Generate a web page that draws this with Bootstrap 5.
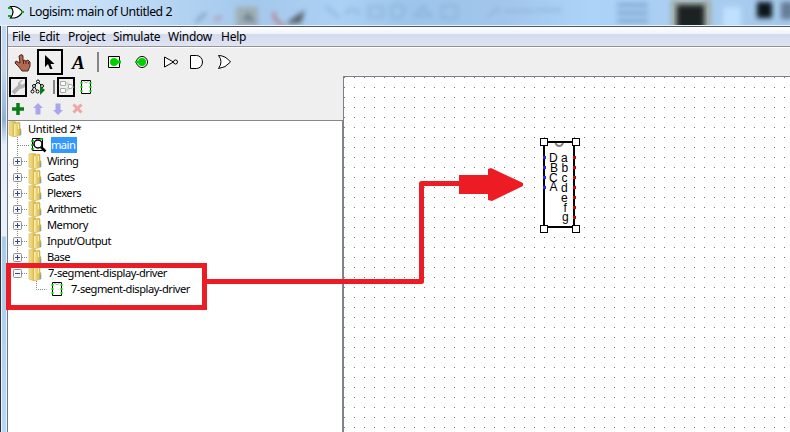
<!DOCTYPE html>
<html lang="en">
<head>
<meta charset="utf-8">
<meta name="viewport" content="width=device-width, initial-scale=1">
<title>Logisim: main of Untitled 2</title>
<link href="https://cdn.jsdelivr.net/npm/bootstrap@5.3.0/dist/css/bootstrap.min.css" rel="stylesheet">
<style>
body{width:790px;height:432px;font-family:"Noto Sans","Open Sans",sans-serif;color:#000;background:#b0d2f5}
svg{display:block;flex:none}
.app{width:790px;height:432px;padding-left:7px;background:linear-gradient(90deg,#2c2f3c 0 1px,#edf4fb 1px 2px,transparent 2px 6px,#e8f3fd 6px 7px,transparent 7px),linear-gradient(#bcd8f4 0,#c4d9ee 70px,#8fb0d4 120px,#e4eef8 145px,#e8f1fa 236px,#abcbea 237px,#b9d8f8 432px)}
.titlebar{height:26px;margin-left:-7px;padding-left:7px;background:linear-gradient(90deg,#d5e6f6 0,#c6dff8 100px,#b2d2f2 185px,#a4c8ec 250px,#acd1f5 340px,#9ec5ea 410px,#a2c6eb 500px,#add3f8 590px,#a4c8ea 790px);border-bottom:1px solid #e9f3fc}
.titlebar .glass{left:0;top:0}
.title-text{font-size:12.3px;line-height:24px;padding-left:5px;white-space:nowrap;letter-spacing:-.46px}
.frame{height:406px;border-left:1px solid #6f7480;border-top:1px solid #4a5568;background:#efefef}
.menus{height:20px;background:linear-gradient(#fff 0,#eff2f8 7px,#d4dbed 7px,#dfe4f3 19px);border-bottom:1px solid #949494}
.menus span{font-size:12px;line-height:20px;white-space:nowrap;letter-spacing:-.25px}
.tools{height:29px;border-top:1px solid #fff}
.side{width:335px}
.tree{height:312px;border:1px solid #828790;border-width:1px 1px 0 0;background:#fff;font-size:11.15px;line-height:16px;letter-spacing:-.5px}
.tree .rowline{height:16px;white-space:nowrap}
.sel{background:#3399ff;color:#fff;width:26px;height:16px;margin-left:2px;letter-spacing:-.55px}
.sheet{height:356px;border:1px solid #7c808a;border-width:1px 0 0 1px;background:#fff}
.over{left:0;top:0;pointer-events:none}
.pins{font-family:"Liberation Sans",Arial,sans-serif;font-size:12px}
.letter{font:italic bold 19px "Liberation Serif",serif}
</style>
<script src="https://cdn.jsdelivr.net/npm/bootstrap@5.3.0/dist/js/bootstrap.bundle.min.js"></script>
</head>
<body class="m-0 overflow-hidden">
<svg width="0" height="0" class="position-absolute">
 <defs>
  <linearGradient id="gold"><stop stop-color="#f3df8c"/><stop offset=".45" stop-color="#e9d06d"/><stop offset="1" stop-color="#c9a638"/></linearGradient>
  <symbol id="folder" viewBox="0 0 16 16"><path d="M1 1 4.500 0 8 1v13l-2 2-5-2Z" fill="url(#gold)" stroke="#d3b858" stroke-width=".6"/><path d="M6 2.500 11 1l1 1v5l1 1v6l-7 2Z" fill="url(#gold)" stroke="#cdb04e" stroke-width=".6"/><path d="M6.700 3v12M10.500 3v5" stroke="#fff2b7"/><path d="M12.500 10v4" stroke="#5aabe4" stroke-width="1.200"/></symbol>
  <symbol id="plus" viewBox="0 0 9 9"><rect x=".5" y=".5" width="8" height="8" rx="1" fill="#f7f7f7" stroke="#919191"/><path d="M2 4.500h5M4.500 2v5" stroke="#344b86"/></symbol>
  <symbol id="minus" viewBox="0 0 9 9"><rect x=".5" y=".5" width="8" height="8" rx="1" fill="#f7f7f7" stroke="#919191"/><path d="M2 4.500h5" stroke="#344b86"/></symbol>
  <symbol id="chip" viewBox="0 0 14 16"><path d="M2.500 1.500h9v13h-9Z" fill="#fff" stroke="#000"/><path d="M5 2c0 2 4 2 4 0" fill="none" stroke="#999"/><path d="M1.500 4h2M1.500 8h2M1.500 12h2M10.500 4h2M10.500 8h2M10.500 12h2" stroke="#00d000" stroke-width="2"/></symbol>
 </defs>
</svg>
<main class="app position-relative overflow-hidden">
 <header class="titlebar d-flex position-relative">
  <svg class="glass position-absolute" width="790" height="25">
   <defs><filter id="b"><feGaussianBlur stdDeviation="2.500"/></filter><filter id="b2"><feGaussianBlur stdDeviation="4"/></filter></defs>
   <path d="M25 12H165" stroke="#e2effb" stroke-width="18" filter="url(#b2)" opacity=".75"/>
   <g filter="url(#b)"><path d="m196 22 10-9" stroke="#7899b5" stroke-width="3"/><path d="m214 20 8-3" stroke="#b19eb7" stroke-width="4"/><path d="M236 7h22v20h-22Z" fill="#9faeb2"/><path d="m242 20 6-8 8 10Z" fill="#687f93"/><path d="M274 12q-1 10 10 13" fill="none" stroke="#b77980" stroke-width="3"/><path d="m286 24 7-6 12-8-4 13Z" fill="#565f66"/><path d="m325 6 15 12M345 15q8-12 14 0M369 7h14v10h-14ZM391 7l7-3 7 5-4 9h-9ZM415 16l8-10 8 10ZM442 6h15v12h-15Z" fill="none" stroke="#86afd5" stroke-width="3" opacity=".65"/><path d="M488 16 500 8M505 11h29M536 10h26" stroke="#83aacd" stroke-width="3" opacity=".55"/><path d="M617 5h31M617 13h31M617 21h31" stroke="#7297c3" stroke-width="4" opacity=".7"/><path d="M671 0h40v28h-40Z" fill="#a0aaa6"/><path d="M723 7h18v22h-18Z" fill="#bfe0ff"/><path d="M757 2h15v16h-15Z" fill="#0c151e"/><path d="M781 2h12v17h-12Z" fill="#657c96"/></g>
   <g filter="url(#b)"><path d="M677 5h27v24h-27Z" fill="#1b2024"/></g>
  </svg>
  <div class="position-relative d-flex">
   <svg width="17" height="25"><path d="M3.500 6.500h4q5 1 8 5.500-3 5-8 6h-4q5-6 0-11.500Z" fill="#fff" stroke="#000" stroke-width="1.200"/><path d="M1 8h3M1 16h3M14 12h3" stroke="#00b800" stroke-width="2"/></svg>
   <div class="title-text">Logisim: main of Untitled 2</div>
  </div>
 </header>
 <div class="frame">
  <nav class="menus d-flex"><span style="width:27px;padding-left:4px">File</span><span style="width:29px;padding-left:4px">Edit</span><span style="width:45px;padding-left:4px">Project</span><span style="width:55px;padding-left:4px">Simulate</span><span style="width:53px;padding-left:4px">Window</span><span style="padding-left:4px">Help</span></nav>
  <div class="tools">
   <svg width="240" height="28" viewBox="8 48 240 28">
    <path d="M20.500 55q2-1 2.500 1v5l1-1 2 1 2-1 1 1 1 1v4l-2 5h-6l-3-4-4-4 1-2 4 2-1-7Z" fill="#b46a50" stroke="#4b241b"/><path d="M23.500 61v3M26 61v3M28.500 62v2" stroke="#56271c"/>
    <path d="M38 50h24v24H38Z" fill="#efefef" stroke="#000" stroke-width="2"/><path d="M45 55v12l3-3 2 5h2.500l-2-5h4Z"/>
    <text class="letter" x="72" y="69">A</text>
    <path d="M98 52v20" stroke="#858585" stroke-width="2"/>
    <path d="M108.500 56.500h11v11h-11Z" fill="#fff" stroke="#000"/><circle cx="114" cy="62" r="4" fill="#00cf00"/><path d="M115 62h6" stroke="#00cf00" stroke-width="3"/>
    <circle cx="142" cy="62" r="5.500" fill="#fff" stroke="#000"/><circle cx="142" cy="62" r="4" fill="#00cf00"/><path d="M135 62h5" stroke="#00cf00" stroke-width="2"/>
    <path d="m164.500 57 9 5-9 5Z" fill="#fff" stroke="#000"/><circle cx="175.500" cy="62" r="2" fill="#fff" stroke="#000"/>
    <path d="M190.500 55.500h6a6 6.500 0 0 1 0 13h-6Z" fill="#fff" stroke="#000"/>
    <path d="M218.500 55.500q7 0 12 6.500-5 6-12 6.500 5-7 0-13Z" fill="#fff" stroke="#000"/>
   </svg>
  </div>
  <div class="d-flex">
   <aside class="side">
    <svg width="120" height="44" viewBox="8 76 120 44">
     <path d="M10 78h16v18H10Z" fill="#efefef" stroke="#000" stroke-width="2"/><path d="m13 93 7-7" stroke="#b3b3b3" stroke-width="4"/><path d="m21 80-3 3v4l3 2 4-2v-4l-3 2-2-2 3-3Z" fill="#b3b3b3"/>
     <path d="m38 82-4 4-2 5M38 82l4 4M34 86l3.500 6" fill="none" stroke="#000"/><g fill="#fff" stroke="#000"><circle cx="38" cy="81.500" r="1.500"/><circle cx="34" cy="86" r="1.500"/><circle cx="42" cy="86" r="1.500"/><circle cx="32.500" cy="91.500" r="1.500"/><circle cx="37.500" cy="91.500" r="1.500"/></g><path d="m40 86 5 4-5 5Z" fill="#087a18"/>
     <path d="M54 80v14" stroke="#858585" stroke-width="2"/>
     <path d="M58 78h16v18H58Z" fill="#efefef" stroke="#000" stroke-width="2"/><path d="M60.500 81.500h5v4h-5ZM60.500 88.500h5v4h-5ZM68.500 84.500h3q2 2 0 4h-3Z" fill="#fff" stroke="#aaa"/><path d="M66 83h2v3M66 90h2v-3M72 87h2" fill="none" stroke="#a4d6a4"/>
     <svg x="79" y="79" width="14" height="16"><use href="#chip"/></svg>
     <path d="M18 103v12M12 109h12" stroke="#087d16" stroke-width="3.500"/>
     <path d="m38 103 5 5h-2.500v6.500h-5V108H33ZM58 115l5-5h-2.500v-6.500h-5v6.500H53Z" fill="#a9a7ea"/><path d="m73.500 104.500 8 8m0-8-8 8" stroke="#eea6a6" stroke-width="3"/>
    </svg>
    <div class="tree position-relative">
     <svg class="over position-absolute" width="60" height="190" viewBox="8 121 60 190"><path d="M17.500 137v136M18 145.500h11M22 161.500h6M22 177.500h6M22 193.500h6M22 209.500h6M22 225.500h6M22 241.500h6M22 257.500h6M22 273.500h6M36.500 281v8.500h10" fill="none" stroke="#888" stroke-dasharray="1 1"/></svg>
     <div class="position-relative">
      <div class="rowline d-flex"><svg width="16" height="16"><use href="#folder"/></svg><span class="ps-1" style="letter-spacing:-.36px">Untitled 2*</span></div>
      <div class="rowline d-flex" style="padding-left:23px"><svg width="18" height="16"><path d="M1.500 1.500h10v12h-10Z" fill="#fff" stroke="#000"/><path d="M0 4h3M0 8h3M0 12h3M9 2h3" stroke="#00c800" stroke-width="1.500"/><circle cx="7" cy="7" r="4" fill="#fff" stroke="#000" stroke-width="1.500"/><path d="m10 10 4.500 4.500" stroke="#000" stroke-width="2.700"/></svg><span class="sel">main</span></div>
      <div id="libraries"></div>
      <div class="rowline d-flex" style="padding-left:42px"><svg width="14" height="16"><use href="#chip"/></svg><span style="padding-left:7px">7-segment-display-driver</span></div>
     </div>
    </div>
   </aside>
   <section class="sheet flex-grow-1">
    <svg width="446" height="355" viewBox="344 77 446 355" shape-rendering="crispEdges">
     <defs><pattern id="dots" x="344" y="77" width="10" height="10" patternUnits="userSpaceOnUse"><path d="M0 0h1v1H0Z" fill="#777"/></pattern></defs>
     <path d="M344 77h446v355H344Z" fill="url(#dots)"/>
     <path d="M544 142h30v85h-30Z" fill="#fff" stroke="#000" stroke-width="2"/>
     <path d="M555.500 143a4 4.500 0 0 0 7.500 0" fill="none" stroke="#808080" stroke-width="2" shape-rendering="auto"/>
     <g fill="#fff" stroke="#000"><path d="M540.500 138.500h7v7h-7ZM572.500 138.500h7v7h-7ZM540.500 225.500h7v7h-7ZM572.500 225.500h7v7h-7Z"/></g>
     <path d="M543 156h3v3h-3ZM543 166h3v3h-3ZM543 176h3v3h-3ZM543 186h3v3h-3Z" fill="#2525ff"/>
     <path d="M573 156h3v3h-3ZM573 166h3v3h-3ZM573 176h3v3h-3ZM573 186h3v3h-3ZM573 196h3v3h-3ZM573 206h3v3h-3ZM573 216h3v3h-3Z" fill="#c80000"/>
     <g class="pins"><text x="549" y="162">D</text><text x="550" y="172">B</text><text x="549" y="182">C</text><text x="549.500" y="191">A</text><text x="561" y="162">a</text><text x="561.500" y="172">b</text><text x="561.500" y="182">c</text><text x="561" y="192">d</text><text x="561" y="202">e</text><text x="563.500" y="212">f</text><text x="562" y="221">g</text></g>
    </svg>
   </section>
  </div>
 </div>
 <svg class="over position-absolute" width="790" height="432"><path d="M8.500 265.500h196v42H8.500Z" fill="none" stroke="#ed1c24" stroke-width="5"/><path d="M206 281.500h215.500v-98H460" fill="none" stroke="#ed1c24" stroke-width="5" stroke-linejoin="round"/><path d="M459 175h29v-6l3-1 32 15v3l-31 15-4-1v-6h-29Z" fill="#ed1c24"/></svg>
</main>
<script>
const names=["Wiring","Gates","Plexers","Arithmetic","Memory","Input/Output","Base","7-segment-display-driver"];
document.getElementById("libraries").innerHTML=names.map((name,i)=>`<div class="rowline d-flex align-items-center" style="padding-left:5px"><svg width="9" height="9"><use href="#${i===7?"minus":"plus"}"/></svg><svg width="16" height="16" style="margin-left:6px"><use href="#folder"/></svg><span style="padding-left:${i===7?4:3}px">${name}</span></div>`).join("");
</script>
</body>
</html>
